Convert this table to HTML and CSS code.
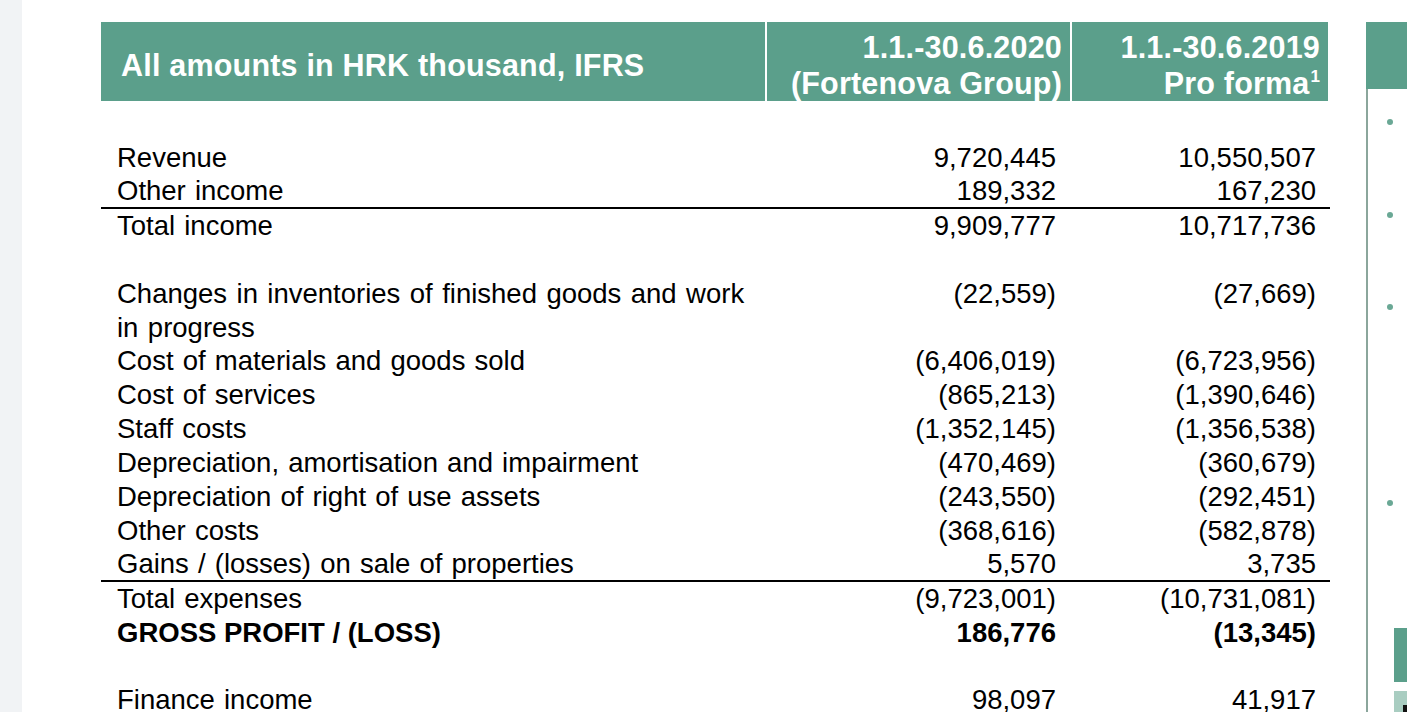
FILE: index.html
```html
<!DOCTYPE html>
<html lang="en">
<head>
<meta charset="utf-8">
<title>Income statement</title>
<link rel="stylesheet" href="styles.css">
</head>
<body>
<div class="page">
  <div class="gutter"></div>
  <main class="slide">
    <div class="statement">
      <div class="head">
        <div class="hcell hlabel"><span>All amounts in HRK thousand, IFRS</span></div>
        <div class="hcell hnum"><span>1.1.-30.6.2020<br>(Fortenova Group)</span></div>
        <div class="hcell hnum"><span>1.1.-30.6.2019<br>Pro forma<sup>1</sup></span></div>
      </div>
      <div class="rows">
        <div class="row"><span class="lbl">Revenue</span><span class="num">9,720,445</span><span class="num">10,550,507</span></div>
        <div class="row rule"><span class="lbl">Other income</span><span class="num">189,332</span><span class="num">167,230</span></div>
        <div class="row"><span class="lbl">Total income</span><span class="num">9,909,777</span><span class="num">10,717,736</span></div>
        <div class="row spacer"></div>
        <div class="row"><span class="lbl wrap">Changes in inventories of finished goods and work in progress</span><span class="num">(22,559)</span><span class="num">(27,669)</span></div>
        <div class="row"><span class="lbl">Cost of materials and goods sold</span><span class="num">(6,406,019)</span><span class="num">(6,723,956)</span></div>
        <div class="row"><span class="lbl">Cost of services</span><span class="num">(865,213)</span><span class="num">(1,390,646)</span></div>
        <div class="row"><span class="lbl">Staff costs</span><span class="num">(1,352,145)</span><span class="num">(1,356,538)</span></div>
        <div class="row"><span class="lbl">Depreciation, amortisation and impairment</span><span class="num">(470,469)</span><span class="num">(360,679)</span></div>
        <div class="row"><span class="lbl">Depreciation of right of use assets</span><span class="num">(243,550)</span><span class="num">(292,451)</span></div>
        <div class="row"><span class="lbl">Other costs</span><span class="num">(368,616)</span><span class="num">(582,878)</span></div>
        <div class="row rule"><span class="lbl">Gains / (losses) on sale of properties</span><span class="num">5,570</span><span class="num">3,735</span></div>
        <div class="row"><span class="lbl">Total expenses</span><span class="num">(9,723,001)</span><span class="num">(10,731,081)</span></div>
        <div class="row strong"><span class="lbl">GROSS PROFIT / (LOSS)</span><span class="num">186,776</span><span class="num">(13,345)</span></div>
        <div class="row spacer"></div>
        <div class="row"><span class="lbl">Finance income</span><span class="num">98,097</span><span class="num">41,917</span></div>
      </div>
    </div>
    <aside class="side">
      <div class="side-head"></div>
      <div class="side-body">
        <ul class="bullets">
          <li class="b1"></li>
          <li class="b2"></li>
          <li class="b3"></li>
          <li class="b4"></li>
        </ul>
        <div class="side-boxes">
          <div class="box-dark"></div>
          <div class="box-light"><span class="box-mark"></span></div>
        </div>
      </div>
    </aside>
  </main>
</div>
</body>
</html>
```
FILE: styles.css
```css
* { box-sizing: border-box; }
html, body { margin: 0; padding: 0; }
body {
  background: #ffffff;
  font-family: "Liberation Sans", Arial, sans-serif;
  color: #000;
  width: 1407px;
  height: 712px;
  overflow: hidden;
}
.page {
  display: flex;
  height: 712px;
}
.gutter {
  width: 22px;
  flex: none;
  background: #f1f3f5;
}
.slide {
  flex: 1;
  display: flex;
  padding-left: 79px;
  padding-top: 22px;
  gap: 36px;
  overflow: hidden;
}
.statement {
  width: 1229px;
  flex: none;
}
.head {
  display: grid;
  grid-template-columns: 664px 303px 1fr;
  column-gap: 2px;
  height: 79px;
  margin-right: 2px;
}
.hcell {
  background: #5b9f8b;
  color: #fff;
  font-weight: bold;
  font-size: 30.5px;
  letter-spacing: 0.2px;
  line-height: 36px;
  display: flex;
  align-items: center;
  padding-top: 7px;
}
.hlabel {
  padding-left: 20px;
}
.hnum {
  justify-content: flex-end;
  text-align: right;
  padding-right: 8px;
}
.hnum sup {
  font-size: 17px;
  font-weight: bold;
  line-height: 0;
  vertical-align: 12px;
  margin-left: 1px;
  letter-spacing: 0;
}
.rows {
  padding-top: 40px;
}
.row {
  display: grid;
  grid-template-columns: 664px 305px 1fr;
  font-size: 27.5px;
  line-height: 33.9px;
  min-height: 33.9px;
}
.row.rule {
  border-bottom: 2px solid #000;
  line-height: 31.9px;
  min-height: 33.9px;
}
.row.strong { font-weight: bold; }
.lbl {
  padding-left: 16px;
  white-space: nowrap;
  word-spacing: 1.5px;
}
.row.strong .lbl { word-spacing: 0; }
.lbl.wrap {
  white-space: normal;
  padding-right: 16px;
  word-spacing: 1.8px;
}
.num {
  text-align: right;
  padding-right: 14px;
  white-space: nowrap;
}
.side {
  flex: none;
  width: 60px;
  display: flex;
  flex-direction: column;
}
.side-head {
  flex: none;
  height: 67px;
  background: #5b9f8b;
}
.side-body {
  flex: 1;
  min-height: 0;
  overflow: hidden;
  border-left: 2px solid #8ba69c;
  display: flex;
  flex-direction: column;
}
.bullets {
  list-style: none;
  margin: 0;
  padding: 0 0 0 19px;
  flex: none;
}
.bullets li {
  width: 6px;
  height: 6px;
  border-radius: 50%;
  background: #6aa895;
}
.b1 { margin-top: 30px; }
.b2 { margin-top: 87px; }
.b3 { margin-top: 86px; }
.b4 { margin-top: 190px; }
.side-boxes {
  flex: none;
  margin-top: 122px;
  padding-left: 26px;
  display: flex;
  flex-direction: column;
  gap: 9px;
}
.box-dark {
  height: 54px;
  background: #5b9f8b;
}
.box-light {
  height: 30px;
  background: #a9cdc1;
  padding: 14px 0 0 9px;
}
.box-mark {
  display: block;
  width: 6px;
  height: 12px;
  background: #111;
}
```
